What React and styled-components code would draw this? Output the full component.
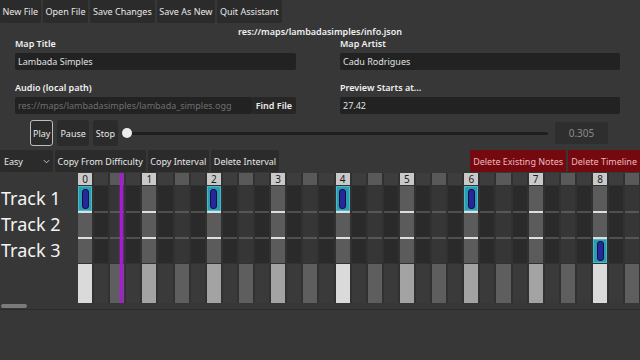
import React from "react";
import styled, { createGlobalStyle } from "styled-components";

const GlobalStyle = createGlobalStyle`
    html, body {
        margin: 0;
        padding: 0;
        background: #373737;
        overflow: hidden;
    }
    body {
        font-family: "Noto Sans", "Open Sans", sans-serif;
        font-size: 9px;
        color: #e6e6e6;
    }
`;

const COLUMNS = 36;
const TRACKS = ["Track 1", "Track 2", "Track 3"];
// [track index, beat index]
const NOTES = [[0, 0], [0, 2], [0, 4], [0, 6], [2, 8]];

function hasNote(track, col) {
    return NOTES.some(([t, b]) => t === track && b * 4 === col);
}

export default function App() {
    const columns = Array.from({ length: COLUMNS }, (_, i) => i);

    return (
        <Page>
            <GlobalStyle />
            <Toolbar>
                <ToolButton>New File</ToolButton>
                <ToolButton>Open File</ToolButton>
                <ToolButton>Save Changes</ToolButton>
                <ToolButton>Save As New</ToolButton>
                <ToolButton>Quit Assistant</ToolButton>
            </Toolbar>
            <FilePath>res://maps/lambadasimples/info.json</FilePath>

            <Form>
                <Field>
                    <Label>Map Title</Label>
                    <Input>Lambada Simples</Input>
                </Field>
                <Field>
                    <Label>Map Artist</Label>
                    <Input>Cadu Rodrigues</Input>
                </Field>
                <Field>
                    <Label>Audio (local path)</Label>
                    <InputRow>
                        <Input $muted>res://maps/lambadasimples/lambada_simples.ogg</Input>
                        <FindButton>Find File</FindButton>
                    </InputRow>
                </Field>
                <Field>
                    <Label>Preview Starts at...</Label>
                    <Input>27.42</Input>
                </Field>
            </Form>

            <Transport>
                <PlayerButton $focused>Play</PlayerButton>
                <PlayerButton>Pause</PlayerButton>
                <PlayerButton>Stop</PlayerButton>
                <Slider>
                    <SliderTrack />
                    <SliderThumb />
                </Slider>
                <ValueBox>0.305</ValueBox>
            </Transport>

            <EditRow>
                <Select>
                    Easy
                    <Chevron viewBox="0 0 8 5">
                        <path d="M1 1 L4 4 L7 1" fill="none" stroke="#cfcfcf" strokeWidth="1.1" />
                    </Chevron>
                </Select>
                <ToolButton>Copy From Difficulty</ToolButton>
                <ToolButton>Copy Interval</ToolButton>
                <ToolButton>Delete Interval</ToolButton>
                <Spacer />
                <DangerButton>Delete Existing Notes</DangerButton>
                <DangerButton>Delete Timeline</DangerButton>
            </EditRow>

            <Timeline>
                <TrackLabels>
                    <HeaderSpacer />
                    {TRACKS.map((t) => (
                        <TrackLabel key={t}>{t}</TrackLabel>
                    ))}
                </TrackLabels>
                <Lanes>
                    {columns.map((i) => {
                        const kind = i % 4 === 0 ? "beat" : i % 4 === 2 ? "half" : "sub";
                        const measure = i % 16 === 0;
                        return (
                            <Lane key={i}>
                                <HeaderCell $kind={kind}>{kind === "beat" ? i / 4 : ""}</HeaderCell>
                                {TRACKS.map((t, ti) => (
                                    <TrackCell key={t} $kind={kind} $first={ti === 0}>
                                        {hasNote(ti, i) && (
                                            <Note>
                                                <NotePill />
                                            </Note>
                                        )}
                                    </TrackCell>
                                ))}
                                <BarCell $kind={kind} $measure={measure} />
                            </Lane>
                        );
                    })}
                    <Playhead />
                </Lanes>
            </Timeline>
            <Scrollbar>
                <ScrollGrabber />
            </Scrollbar>
        </Page>
    );
}

const Page = styled.div`
    width: 640px;
    height: 360px;
    display: flex;
    flex-direction: column;
    overflow: hidden;
`;

const Toolbar = styled.div`
    display: flex;
    gap: 2px;
    height: 24px;
`;

const ToolButton = styled.div`
    display: flex;
    align-items: center;
    padding: 0 3px 0 2.5px;
    height: 23px;
    background: #2b2b2b;
    border-radius: 2px;
    color: #e8e8e8;
    white-space: nowrap;
`;

const FilePath = styled.div`
    text-align: center;
    height: 12px;
    line-height: 12px;
    margin-top: 2px;
    color: #f0f0f0;
    font-weight: 600;
`;

const Form = styled.div`
    display: grid;
    grid-template-columns: 281px 280px;
    column-gap: 44px;
    row-gap: 12px;
    padding: 0 20px 0 15px;
`;

const Field = styled.div`
    display: flex;
    flex-direction: column;
    gap: 3px;
`;

const Label = styled.div`
    height: 12px;
    line-height: 12px;
    color: #f2f2f2;
    font-weight: 600;
`;

const Input = styled.div`
    flex: 1;
    height: 17px;
    line-height: 17px;
    padding: 0 3px;
    background: #222222;
    border-radius: 2px;
    color: ${(p) => (p.$muted ? "#6f6f6f" : "#e0e0e0")};
    white-space: nowrap;
    overflow: hidden;
`;

const InputRow = styled.div`
    display: flex;
`;

const FindButton = styled.div`
    height: 17px;
    line-height: 17px;
    padding: 0 4px;
    background: #262626;
    color: #ececec;
    border-radius: 2px;
    font-weight: 600;
`;

const Transport = styled.div`
    display: flex;
    align-items: center;
    gap: 4px;
    height: 26px;
    margin-top: 6px;
    padding-left: 30px;
`;

const PlayerButton = styled.div`
    box-sizing: border-box;
    height: 26px;
    display: flex;
    align-items: center;
    padding: 0 2px;
    background: #2b2b2b;
    border-radius: 3px;
    border: 1px solid ${(p) => (p.$focused ? "#bdbdbd" : "transparent")};
    color: #e8e8e8;
`;

const Slider = styled.div`
    position: relative;
    flex: 1;
    height: 12px;
    display: flex;
    align-items: center;
`;

const SliderTrack = styled.div`
    flex: 1;
    height: 3px;
    margin-left: 4px;
    background: #1f1f1f;
    border-radius: 2px;
`;

const SliderThumb = styled.div`
    position: absolute;
    left: 0;
    top: 1px;
    width: 10px;
    height: 10px;
    border-radius: 50%;
    background: #ededed;
`;

const ValueBox = styled.div`
    width: 53px;
    height: 22px;
    margin: 0 32px 0 3px;
    display: flex;
    align-items: center;
    justify-content: center;
    background: #2e2e2e;
    border-radius: 2px;
    color: #8a8a8a;
    font-size: 10px;
`;

const EditRow = styled.div`
    display: flex;
    gap: 2px;
    height: 22px;
    margin-top: 4px;
    margin-bottom: 1px;

    & > div {
        height: 22px;
    }
`;

const Select = styled.div`
    width: 53px;
    box-sizing: border-box;
    display: flex;
    align-items: center;
    justify-content: space-between;
    padding: 0 3px 0 4px;
    background: #2b2b2b;
    border-radius: 2px;
    color: #e8e8e8;
`;

const Chevron = styled.svg`
    width: 7px;
    height: 5px;
`;

const Spacer = styled.div`
    flex: 1;
`;

const DangerButton = styled.div`
    display: flex;
    align-items: center;
    padding: 0 3px;
    background: #740a10;
    color: #f0b8bc;
    white-space: nowrap;
`;

const Timeline = styled.div`
    display: flex;
    height: 130px;
`;

const TrackLabels = styled.div`
    width: 78px;
    flex-shrink: 0;
    display: flex;
    flex-direction: column;
`;

const HeaderSpacer = styled.div`
    height: 12px;
`;

const TrackLabel = styled.div`
    height: 26px;
    display: flex;
    align-items: center;
    font-size: 18px;
    color: #f4f4f4;
    padding-left: 1px;
`;

const Lanes = styled.div`
    position: relative;
    flex: 1;
    display: flex;
    gap: 2px;
    overflow: hidden;
    background: #313131;
`;

const Lane = styled.div`
    width: 14.1px;
    flex-shrink: 0;
    display: flex;
    flex-direction: column;
`;

const headerColors = { beat: "#c9c9c9", half: "#595959", sub: "#3d3d3d" };
const trackColors = { beat: "#5b5b5b", half: "#363636", sub: "#2a2a2a" };
const lineColors = { beat: "#dedede", half: "#575757", sub: "#4f4f4f" };
const barColors = { beat: "#a3a3a3", half: "#5e5e5e", sub: "#3a3a3a" };

const HeaderCell = styled.div`
    height: 12px;
    line-height: 12px;
    text-align: center;
    font-size: 10px;
    background: ${(p) => headerColors[p.$kind]};
    color: #1c1c1c;
`;

const TrackCell = styled.div`
    box-sizing: border-box;
    height: 26px;
    background: ${(p) => trackColors[p.$kind]};
    border-top: ${(p) => (p.$first ? "1px solid #313131" : `2px solid ${lineColors[p.$kind]}`)};
    display: flex;
`;

const Note = styled.div`
    flex: 1;
    display: flex;
    align-items: center;
    justify-content: center;
    background: #2c9db0;
    border: 1px solid #48b9c8;
`;

const NotePill = styled.div`
    box-sizing: border-box;
    width: 7px;
    height: 20px;
    border-radius: 3px;
    background: #26279a;
    border: 1px solid #101042;
`;

const BarCell = styled.div`
    flex: 1;
    margin-top: 1px;
    background: ${(p) => (p.$measure ? "#dadada" : barColors[p.$kind])};
`;

const Playhead = styled.div`
    position: absolute;
    left: 42px;
    top: 0;
    bottom: 0;
    width: 3px;
    background: #a21fd0;
    box-shadow: 0 0 3px rgba(170, 40, 220, 0.7);
`;

const Scrollbar = styled.div`
    height: 6px;
    border-bottom: 1px solid #2a2a2a;
    display: flex;
    align-items: center;
`;

const ScrollGrabber = styled.div`
    width: 26px;
    height: 4px;
    margin-left: 1px;
    border-radius: 2px;
    background: #7a7a7a;
`;
